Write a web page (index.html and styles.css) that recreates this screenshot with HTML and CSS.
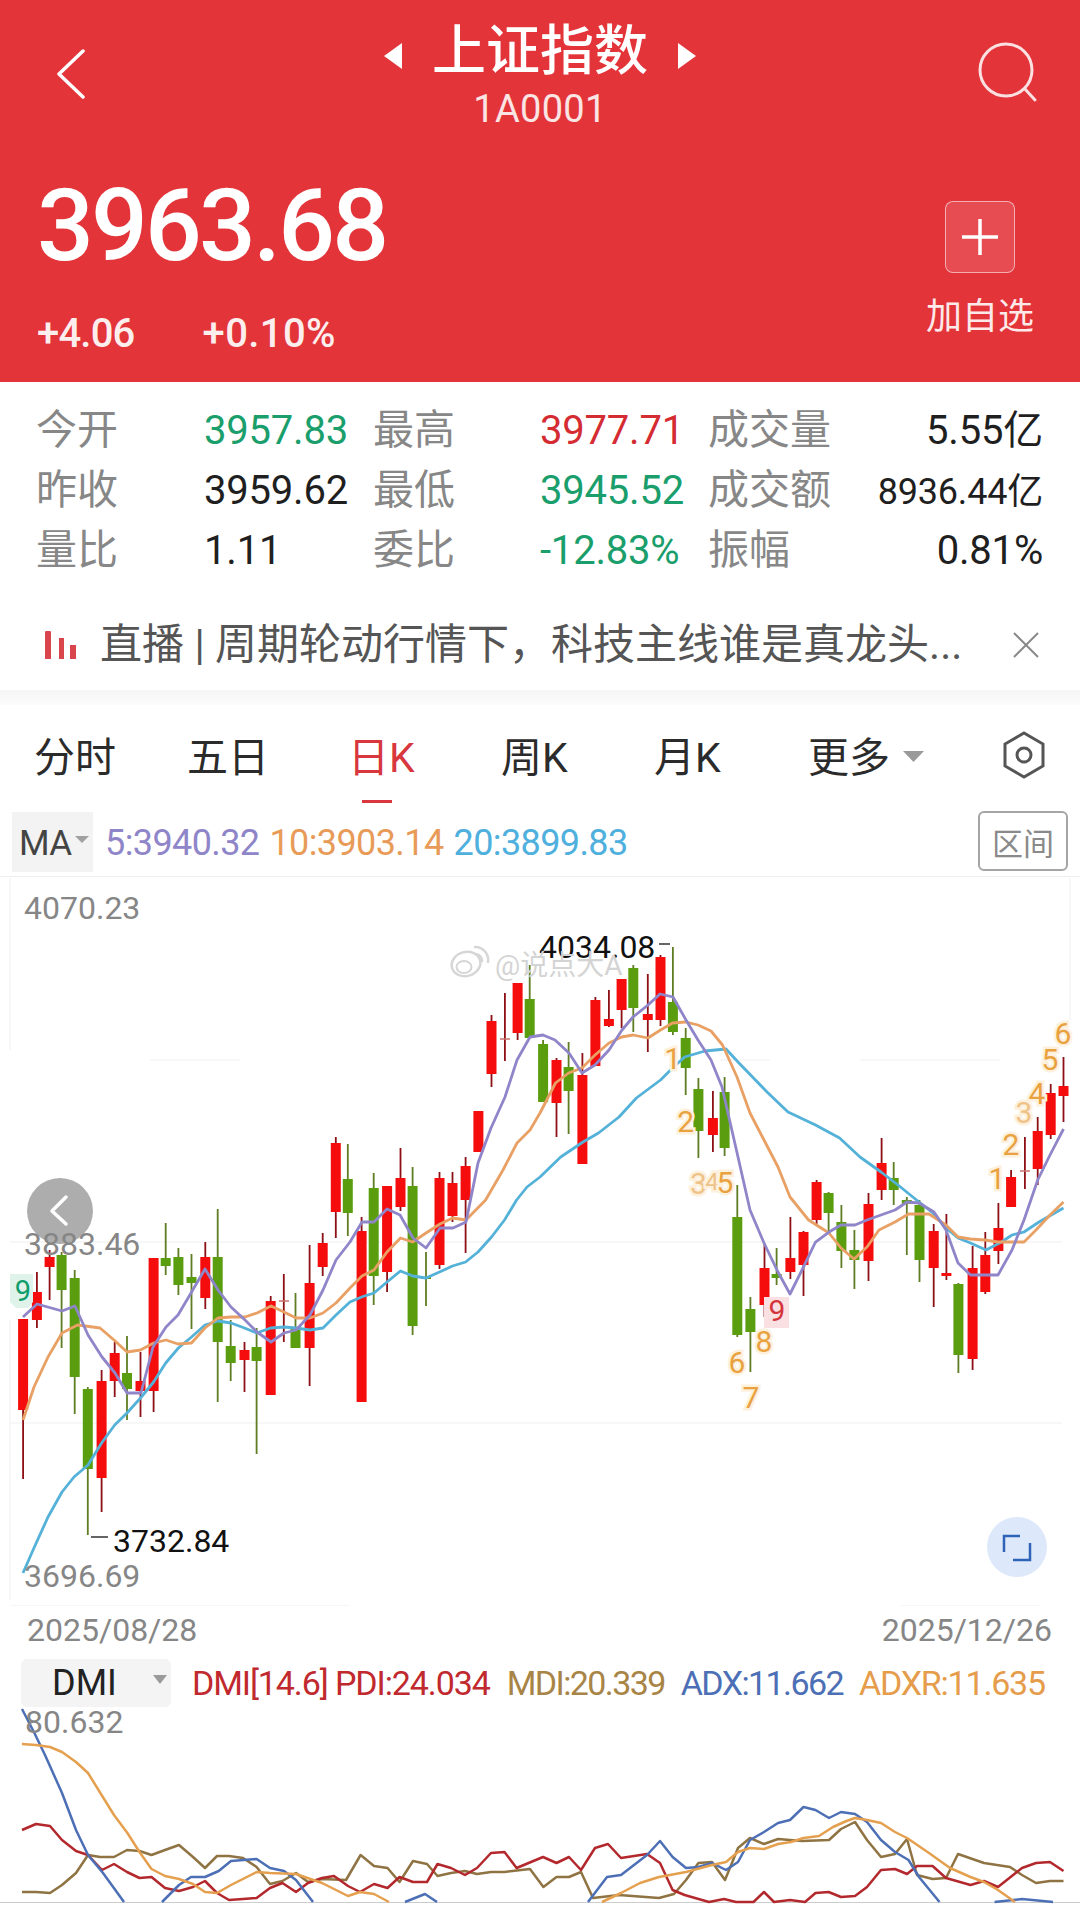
FILE: index.html
```html
<!DOCTYPE html>
<html lang="zh-CN">
<head>
<meta charset="utf-8">
<title>上证指数</title>
<link rel="stylesheet" href="styles.css">
</head>
<body>
<header class="header">
  <nav class="nav">
    <svg class="back" viewBox="0 0 30 50"><path d="M27 2 3 25l24 23"/></svg>
    <div class="nav-center">
      <div class="title-row">
        <svg class="tri" viewBox="0 0 20 26"><path d="M19 0v26L1 13z"/></svg>
        <h1 class="title">上证指数</h1>
        <svg class="tri" viewBox="0 0 20 26"><path d="M1 0v26l18-13z"/></svg>
      </div>
      <div class="code">1A0001</div>
    </div>
    <svg class="search" viewBox="0 0 60 60"><circle cx="29" cy="28" r="26"/><path d="M48 47l10 11"/></svg>
  </nav>
  <section class="quote">
    <div class="quote-main">
      <div class="price">3963.68</div>
      <div class="changes"><span class="chg-a">+4.06</span><span class="chg-b">+0.10%</span></div>
    </div>
    <div class="add">
      <div class="add-btn"><svg viewBox="0 0 36 36"><path d="M18 0v36M0 18h36"/></svg></div>
      <div class="add-label">加自选</div>
    </div>
  </section>
</header>

<section class="stats">
  <span class="lbl">今开</span><span class="val up">3957.83</span>
  <span class="lbl">最高</span><span class="val dn">3977.71</span>
  <span class="lbl">成交量</span><span class="val end">5.55亿</span>
  <span class="lbl">昨收</span><span class="val">3959.62</span>
  <span class="lbl">最低</span><span class="val up">3945.52</span>
  <span class="lbl">成交额</span><span class="val end small">8936.44亿</span>
  <span class="lbl">量比</span><span class="val">1.11</span>
  <span class="lbl">委比</span><span class="val up">-12.83%</span>
  <span class="lbl">振幅</span><span class="val end">0.81%</span>
</section>

<section class="news">
  <svg class="news-icon" viewBox="0 0 31 28"><path d="M0 2a3 3 0 0 1 6 0v26H0zM14 7h5v21h-5zM25 14h6v14h-6z"/></svg>
  <span class="news-text">直播 | 周期轮动行情下，科技主线谁是真龙头...</span>
  <svg class="news-close" viewBox="0 0 26 26"><path d="M1 1l24 24M25 1 1 25"/></svg>
</section>
<div class="band"></div>

<section class="tabs">
  <span class="tab">分时</span>
  <span class="tab">五日</span>
  <span class="tab active">日K<i class="tab-line"></i></span>
  <span class="tab">周K</span>
  <span class="tab">月K</span>
  <span class="tab more">更多<svg class="more-tri" viewBox="0 0 21 11"><path d="M0 0h21L10.500 11z"/></svg></span>
  <svg class="hex" viewBox="0 0 44 48"><path d="M22 2 41 13v22L22 46 3 35V13z"/><circle cx="22" cy="24" r="7"/></svg>
</section>

<section class="ma-row">
  <div class="ma-box">MA<svg class="ma-tri" viewBox="0 0 14 7"><path d="M0 0h14L7 7z"/></svg></div>
  <div class="ma-legend">
    <span class="c5">5:3940.32</span>
    <span class="c10">10:3903.14</span>
    <span class="c20">20:3899.83</span>
  </div>
  <div class="range">区间</div>
</section>

<section class="chart">
  <svg class="kline" viewBox="0 877 1080 729">
    <path class="grid" d="M10 878V1050M10 1320V1600M1070 878V1020M10 1242H1062M10 1423H1062M10 1606H350M900 1606H1040M150 1060H240M720 1060H770M860 1060H1000"/>

    <path class="wick-r" d="M23.100 1319V1479M36.900 1272V1328M49.600 1250V1300M101.600 1370V1512M114.700 1342V1397M140.500 1352V1417M153.600 1258V1412M205.300 1242V1309M244.500 1342V1392M270.700 1296V1395M283.800 1274V1342M309.600 1245V1386M322.700 1233V1276M335.800 1137V1238M361.600 1217V1402M387.100 1186V1292M400.500 1148V1211M439.500 1172V1269M452.500 1172V1222M465.600 1157V1253M491.500 1015V1087M504.900 993V1061M517.600 983V1040M556.500 1058V1137M582.400 1053V1164M595.400 997V1066M608.900 990V1027M621.600 979V1028M647.800 974V1052M660.500 955V1026M712.900 1091V1152M764.500 1243V1317M790.400 1217V1279M803.500 1231V1296M816.600 1180V1226M868.500 1193V1281M881.600 1138V1200M933.700 1224V1307M946.400 1214V1280M972.600 1246V1370M985.300 1232V1294M998.400 1203V1264M1011.100 1170V1207M1024.900 1137V1189M1037.700 1117V1185M1050.700 1084V1139M1063.500 1057V1122"/>
    <path class="wick-g" d="M61.600 1252V1348M74.700 1270V1414M87.800 1387V1535M127 1336V1420M165.700 1223V1275M178.400 1248V1295M191.500 1254V1329M217.700 1209V1402M230.700 1320V1381M256.600 1328V1454M295.500 1293V1348M347.800 1144V1236M373.700 1173V1305M412.600 1167V1335M426 1252V1306M529.700 965V1038M543.100 1040V1102M568.600 1042V1134M633.300 965V1032M672.900 947V1035M685.700 1028V1095M698.400 1078V1158M724.600 1077V1156M737.300 1185V1337M750.400 1297V1372M776.600 1248V1285M828.600 1192V1232M841.400 1205V1268M854.400 1230V1289M893.700 1162V1205M906.800 1197V1255M919.500 1200V1282M958.400 1283V1373"/>

    <path class="body-r" d="M23.100 1319V1410M36.900 1292V1320M49.600 1257V1267M101.600 1381V1478M114.700 1353V1381M140.500 1381V1391M153.600 1258V1391M205.300 1257V1298M244.500 1350V1360M270.700 1301V1395M309.600 1283V1348M322.700 1243V1267M335.800 1143V1212M361.600 1231V1402M387.100 1186V1272M400.500 1178V1207M439.500 1178V1265M452.500 1183V1216M465.600 1166V1200M478.400 1111V1152M491.500 1021V1074M517.600 983V1033M556.500 1060V1103M582.400 1075V1164M595.400 1000V1066M608.900 1019V1026M621.600 979V1010M647.800 1014V1020M660.500 957V1020M712.900 1118V1135M764.500 1268V1305M790.400 1258V1272M803.500 1232V1265M816.600 1182V1220M868.500 1204V1261M881.600 1163V1190M933.700 1231V1268M946.400 1273V1276M972.600 1268V1359M985.300 1255V1292M998.400 1228V1251M1011.100 1177V1207M1037.700 1131V1169M1050.700 1093V1135M1063.500 1086V1096"/>
    <path class="body-g" d="M61.600 1255V1290M74.700 1278V1377M87.800 1389V1469M127 1373V1389M165.700 1258V1266M178.400 1257V1285M191.500 1277V1283M217.700 1257V1342M230.700 1346V1363M256.600 1347V1361M295.500 1328V1348M347.800 1179V1213M373.700 1188V1276M412.600 1186V1326M426 1277V1279M529.700 999V1038M543.100 1044V1102M568.600 1067V1091M633.300 968V1008M672.900 1002V1032M685.700 1038V1068M698.400 1089V1131M724.600 1092V1148M737.300 1217V1335M750.400 1309V1332M776.600 1274V1278M828.600 1193V1213M841.400 1222V1251M854.400 1250V1260M893.700 1178V1190M906.800 1200V1204M919.500 1205V1260M958.400 1284V1355"/>
    <path class="doji" d="M279 1301h10M500 1039h10M1020 1171h10"/>

    <polyline class="ma20" points="23,1573 34.400,1547 48,1517 62,1492 74,1477 88,1465 101.600,1443 114.700,1425 127,1413 140.500,1398 153.600,1382 165.700,1363 178.400,1348 191.500,1337 205,1325 218,1321 231,1323 244.500,1328 256.600,1333 270.700,1328 284,1327 296,1328 310,1330 323,1328 336,1315 350,1302 361.600,1297 374,1293 387,1282 400.500,1271 412.600,1276 426,1278 439.500,1272 452.500,1266 465.600,1262 478,1252 491.500,1237 504.500,1220 516.600,1200 527,1187 540,1177 560.700,1157 583,1142 598.500,1133 619,1117 636.400,1098 660.500,1080 672.600,1068 684.600,1057 705,1051 726,1049 738,1062 753.500,1078 767,1092 788,1112 815.500,1125 839.600,1138 860,1157 881,1172 898,1185 919,1202 933,1213 946,1228 958,1238 970.500,1243 986,1250 1001.500,1242 1012,1235 1024,1232 1039,1222 1063.500,1208"/>
    <polyline class="ma10" points="23,1420 34,1387 48,1357 62,1333 77.500,1325 100,1328 114,1340 127,1352 140.500,1350 153.600,1343 166,1340 178,1344 191.500,1343 205,1328 218,1318 231,1317 245,1317 257,1313 271,1306 284,1312 296,1318 310,1318 323,1313 336,1303 350,1288 362,1276 374,1270 387,1252 400.500,1238 412.600,1242 426,1233 440,1224 452.500,1218 466,1220 485.600,1200 503,1170 517,1143 530,1130 540,1113 555.500,1083 568.600,1073 582,1068 595,1055 609,1043 621.600,1037 633,1035 648,1038 660.500,1030 672.600,1023 685.700,1022 698,1025 711,1031 722.500,1045 737,1077 750,1113 764,1140 778,1167 790,1197 808.600,1220 829,1233 841,1248 854,1259 867,1247 879,1230 895,1222 908.500,1214 929,1214 946,1225 958,1237 970.500,1239 985,1240 998,1242 1024,1242 1036,1230 1050,1215 1063.500,1202"/>
    <polyline class="ma5" points="23,1317 37,1304 62,1311 75,1306 88,1335 102,1357 115,1373 127,1393 141,1393 153,1347 166,1327 178,1315 191,1293 205,1269 218,1290 231,1307 245,1320 257,1332 271,1342 284,1333 296,1330 310,1315 323,1290 336,1260 350,1242 362,1222 374,1222 387,1209 400,1215 413,1238 426,1248 440,1228 453,1228 466,1222 478,1163 491,1128 505,1097 517,1060 530,1037 543,1035 555,1040 569,1053 582,1073 595,1065 609,1050 622,1030 633,1017 648,1005 660,994 673,997 686,1020 698,1040 711,1060 722,1087 738,1157 750,1210 764,1243 778,1272 790,1294 803,1268 815.500,1242 829,1232 841,1225 855,1225 867,1220 881,1215 895,1210 907,1202 919,1203 934,1212 946,1230 958,1263 970.500,1275 985,1275 998,1275 1012,1250 1024,1220 1037.700,1180 1050,1155 1063.500,1129"/>

    <path class="badge-g" d="M10 1274h23v28l-5 6H16l-6-6z"/>
    <text class="bdg-g" x="23" y="1301">9</text>
    <rect class="badge-r" x="764" y="1297" width="25" height="31"/>
    <text class="bdg-r" x="777" y="1321">9</text>

    <text class="nine" x="672.600" y="1069">1</text>
    <text class="nine" x="685.700" y="1132">2</text>
    <text class="nine faint" x="698.400" y="1194">3</text>
    <text class="nine faint mini" x="712" y="1190">4</text>
    <text class="nine" x="725" y="1193">5</text>
    <text class="nine" x="737" y="1373">6</text>
    <text class="nine" x="751" y="1408">7</text>
    <text class="nine" x="764" y="1352">8</text>
    <text class="nine" x="997" y="1189">1</text>
    <text class="nine" x="1011" y="1155">2</text>
    <text class="nine faint" x="1024" y="1123">3</text>
    <text class="nine" x="1037" y="1104">4</text>
    <text class="nine" x="1050" y="1070">5</text>
    <text class="nine" x="1063" y="1044">6</text>

    <circle class="prev-btn" cx="60" cy="1211" r="33"/>
    <path class="prev-arrow" d="M66 1197 52 1211l14 13"/>

    <text class="axis" x="24" y="919">4070.23</text>
    <text class="axis" x="24" y="1255">3883.46</text>
    <text class="axis" x="24" y="1587">3696.69</text>
    <text class="extreme" x="539" y="958">4034.08</text>
    <text class="extreme" x="113" y="1552">3732.84</text>
    <path class="tick" d="M659 944h11M91 1537h17"/>

    <g class="wb">
      <ellipse class="wb-body" cx="466" cy="964" rx="14.500" ry="12" transform="rotate(-15 466 964)"/>
      <ellipse class="wb-eye" cx="464" cy="967" rx="7.500" ry="6"/>
      <path class="wb-arc" d="M475 947a13 13 0 0 1 13 15M476 954a7 7 0 0 1 6 7"/>
    </g>
    <text class="wb-text" x="495" y="975">@说点大A</text>

    <circle class="expand-btn" cx="1017" cy="1547" r="30"/>
    <path class="expand-icon" d="M1020 1536h-16v16M1030 1543v17h-17"/>
  </svg>
</section>

<section class="dates"><span>2025/08/28</span><span>2025/12/26</span></section>

<section class="dmi-row">
  <div class="dmi-box">DMI<svg class="dmi-tri" viewBox="0 0 14 9"><path d="M0 0h14L7 9z"/></svg></div>
  <span class="d-red">DMI[14.6] PDI:24.034</span>
  <span class="d-brown">MDI:20.339</span>
  <span class="d-blue">ADX:11.662</span>
  <span class="d-orange">ADXR:11.635</span>
</section>

<section class="dmi-chart">
  <svg class="dmi" viewBox="0 1707 1080 195">
    <polyline class="l-brown" points="22,1892 36,1892 50,1893 62,1885 76,1873 88,1855 100,1857 114,1857 127,1850 139.500,1851 151.500,1855 165,1850 179,1845 193,1857 205,1868 217,1856 229,1856 243,1858 256.600,1867 270,1884 282.400,1881 296,1873 308,1882 322,1879 346,1880 360.600,1855 374,1866 387.500,1868 399.500,1882 413,1861 427,1864 437.500,1876 451,1873 465,1871 477,1874 491,1872 504.500,1872 530,1869 543.400,1887 556.500,1877 569,1877 581,1872 593,1898 619,1895 659,1898 674,1894 686,1880 698.400,1863 712,1862 725,1880 738,1848 750,1838 764,1844 778,1839 802,1841 829,1840 841,1829 855,1822 867,1840 881,1857 895,1854 907,1839 917,1875 932.600,1879 946,1878 958,1854 984,1863 1010,1867 1022,1875 1036,1883 1050,1881 1063.500,1881"/>
    <polyline class="l-red" points="22,1830 36,1824 50,1826 62,1840 76,1851 88,1855 102,1870 114,1864 127,1872 139.500,1878 151.500,1877 165,1888 179,1891 193,1887 205,1881 217,1893 229,1900 243,1899 256.600,1898 270,1888 282.400,1883 296,1892 308,1883 322,1878 334,1876 348,1886 360,1892 374,1884 387.500,1888 399.500,1877 413,1882 427,1882 437.500,1864 451,1868 465,1875 477,1868 491,1853 504.500,1852 516.600,1868 543,1857 556.500,1863 569,1857 581,1870 595,1848 608,1844 621,1858 647,1854 660,1863 672.600,1890 684.600,1895 709,1902 724,1899 736,1902 753.500,1902 764,1892 774,1902 790,1900 805,1902 815.500,1893 828.600,1892 841,1897 855,1896 867,1887 881,1870 895,1869 907,1874 917,1866 932.600,1866 946,1878 970.500,1885 984,1881 998,1887 1022,1868 1036,1863 1050,1862 1063.500,1871"/>
    <path class="l-blue" d="M22 1709 34.400 1733 45 1755 62 1793 76 1830 88 1855 103 1873 124 1902M162 1902 179 1885 191 1877 205 1877 218.700 1871 231 1861 256.600 1859 270 1868 284 1871 296 1880 313 1902M405 1902 425 1894 437 1902M588 1902 607 1877 621 1875 647 1855 660 1841 672.600 1857 686 1868 698.400 1867 712 1863 726 1870 738 1862 750 1840 764 1832 778 1823 790 1820 803.500 1807 815.500 1810 829 1818 841 1812 855 1814 867 1822 881 1840 895 1852 908.500 1860 919 1877 939.500 1902M994.600 1902 1022 1899 1053 1902"/>
    <path class="l-orange" d="M22 1744 36 1745 50 1747 62 1752 76 1762 88 1773 101.600 1795 114 1815 127.400 1833 139.500 1852 151.500 1869 165 1876 179 1879 193 1884 205 1892 217 1893 231 1885 256.600 1872 270 1873 296 1874 322 1883 348 1896 360 1892 374 1894 389 1902M602 1902 621 1893 640 1883 659 1877 686 1872 712 1865 726 1862 738 1852 750 1848 764 1849 778 1844 791 1842 803.500 1838 819 1836 833 1827 846.500 1821 855 1818 867 1820 881 1823 895 1832 907 1838 929 1853 950 1868 970.500 1877 984 1882 998 1890 1015 1902"/>
    <text class="axis" x="25" y="1733">80.632</text>
  </svg>
</section>
</body>
</html>
```

FILE: styles.css
```css
* { box-sizing: border-box; }
html, body { margin: 0; padding: 0; background: #fff; }
body {
  width: 1080px;
  height: 1924px;
  overflow: hidden;
  font-family: Roboto, "Noto Sans CJK SC", sans-serif;
  color: #222;
}

.header {
  height: 382px;
  padding-top: 16px;
  background: #e3343a;
  color: #fff;
}
.nav {
  display: grid;
  grid-template-columns: 1fr auto 1fr;
  height: 115px;
}
.back {
  width: 30px;
  height: 50px;
  margin: 33px 0 0 56px;
  fill: none;
  stroke: #fff;
  stroke-width: 3.5;
  stroke-linecap: round;
  stroke-linejoin: round;
}
.search {
  justify-self: end;
  width: 60px;
  height: 60px;
  margin: 26px 43px 0 0;
  fill: none;
  stroke: #fff;
  stroke-width: 3;
  stroke-linecap: round;
  opacity: .85;
}
.nav-center { display: flex; flex-direction: column; align-items: center; }
.title-row { display: flex; align-items: flex-start; gap: 29px; }
.title {
  margin: 9px 0 0;
  font-size: 54px;
  line-height: 54px;
  font-weight: 500;
}
.tri { width: 20px; height: 26px; margin-top: 27px; fill: #fff; }
.code {
  margin-top: 8px;
  font-size: 38px;
  line-height: 44px;
  letter-spacing: .3px;
  color: #fbe4e4;
}

.quote {
  display: flex;
  justify-content: space-between;
  margin-top: 45px;
  padding: 0 46px 0 37px;
}
.price {
  font-size: 100px;
  line-height: 100px;
  font-weight: 500;
  letter-spacing: -2.8px;
}
.changes {
  display: flex;
  margin-top: 36px;
  font-size: 40px;
  line-height: 44px;
  font-weight: 500;
  letter-spacing: -.8px;
  color: #fdeeee;
}
.chg-a { margin-right: 68px; }
.chg-b { letter-spacing: .4px; }
.add {
  display: flex;
  flex-direction: column;
  align-items: center;
  margin-top: 25px;
}
.add-btn {
  display: flex;
  align-items: center;
  justify-content: center;
  width: 70px;
  height: 72px;
  border: 1.5px solid rgba(255, 255, 255, .55);
  border-radius: 8px;
  background: rgba(255, 255, 255, .12);
}
.add-btn svg { width: 36px; height: 36px; fill: none; stroke: #fff; stroke-width: 3.5; }
.add-label { margin-top: 21px; font-size: 36px; line-height: 46px; color: #fde9e9; }

.stats {
  display: grid;
  grid-template-columns: 168px 169px 167px 168px 123px 212px;
  grid-auto-rows: 60px;
  align-items: baseline;
  padding: 18px 0 0 36px;
  height: 198px;
  font-size: 41px;
  line-height: 60px;
}
.lbl { color: #878787; }
.val { font-size: 40px; color: #1f1f1f; letter-spacing: -.2px; white-space: nowrap; }
.up { color: #1a9e6c; }
.dn { color: #d42c32; }
.end { justify-self: end; }
.small { font-size: 36px; letter-spacing: -.2px; }

.news {
  display: flex;
  align-items: center;
  height: 110px;
  padding: 20px 41px 0 45px;
}
.news-icon { flex: none; width: 31px; height: 28px; fill: #d8454c; }
.news-text {
  margin-left: 24px;
  font-size: 42px;
  line-height: 60px;
  color: #555;
  white-space: nowrap;
}
.news-close {
  flex: none;
  width: 26px;
  height: 26px;
  margin-left: auto;
  fill: none;
  stroke: #8a8a8a;
  stroke-width: 2;
}
.band { height: 15px; background: linear-gradient(#f6f6f6, #fbfbfb); }

.tabs {
  display: grid;
  grid-template-columns: 153px 164px 150px 153px 154px 194px auto;
  align-items: start;
  height: 103px;
  padding-left: 34px;
  font-size: 41px;
  line-height: 60px;
  color: #2b2b2b;
}
.tab { display: flex; flex-direction: column; margin-top: 23px; }
.active { margin-left: -3px; color: #d7373d; }
.tab-line {
  display: block;
  width: 30px;
  height: 3px;
  margin: 12px 0 0 14px;
  background: #d7373d;
}
.more { flex-direction: row; align-items: flex-start; }
.more-tri { width: 21px; height: 11px; margin: 23px 0 0 13px; fill: #9a9a9a; }
.hex {
  width: 44px;
  height: 48px;
  margin-top: 26px;
  fill: none;
  stroke: #555;
  stroke-width: 3;
}

.ma-row {
  display: flex;
  height: 69px;
  padding: 4px 12px 0 12px;
  border-bottom: 1px solid #eee;
}
.ma-box {
  display: flex;
  align-items: center;
  width: 81px;
  height: 60px;
  padding: 2px 0 0 7px;
  background: #f3f3f3;
  font-size: 35px;
  color: #444;
  letter-spacing: -.5px;
}
.ma-tri { width: 14px; height: 7px; margin: -8px 0 0 3px; fill: #a0a0a0; }
.ma-legend {
  display: flex;
  align-items: center;
  gap: 10px;
  height: 62px;
  margin-left: 12px;
  font-size: 36px;
  letter-spacing: -.6px;
}
.c5 { color: #8f85c9; }
.c10 { color: #e89b58; }
.c20 { color: #4fb0de; }
.range {
  display: flex;
  align-items: center;
  justify-content: center;
  width: 90px;
  height: 60px;
  margin: -1px 0 0 auto;
  border: 2px solid #a5a5a5;
  border-radius: 6px;
  font-size: 31px;
  color: #8a8a8a;
}

.chart { height: 729px; }
.kline { display: block; width: 1080px; height: 729px; }
.kline text, .dmi text { font-family: Roboto, "Noto Sans CJK SC", sans-serif; }
.grid { fill: none; stroke: #f5f5f5; stroke-width: 1.5; }
.wick-r { fill: none; stroke: #8c1015; stroke-width: 1.8; }
.wick-g { fill: none; stroke: #5f7d23; stroke-width: 1.8; }
.body-r { fill: none; stroke: #f50c0c; stroke-width: 10; }
.body-g { fill: none; stroke: #5a9e0f; stroke-width: 10; }
.doji { fill: none; stroke: #c9716f; stroke-width: 1.5; }
.ma5, .ma10, .ma20 { fill: none; stroke-width: 2.8; stroke-linejoin: round; }
.ma5 { stroke: #8f85c9; }
.ma10 { stroke: #e8a064; }
.ma20 { stroke: #54b1d8; }
.badge-g { fill: #dff3ea; }
.badge-r { fill: #fbe0e3; }
.bdg-g { fill: #0f9d6a; font-size: 29px; text-anchor: middle; }
.bdg-r { fill: #d4343c; font-size: 30px; text-anchor: middle; }
.nine {
  fill: #e9a23f;
  stroke: #fdf1de;
  stroke-width: 5;
  paint-order: stroke;
  font-size: 30px;
  text-anchor: middle;
}
.faint { fill: #efc287; }
.mini { font-size: 24px; }
.axis { fill: #868686; font-size: 32px; }
.extreme { fill: #111; font-size: 32px; }
.tick { fill: none; stroke: #333; stroke-width: 1.5; }
.wb-body { fill: #fff; stroke: #d6d6d6; stroke-width: 2.5; }
.wb-eye { fill: #fff; stroke: #d6d6d6; stroke-width: 2; }
.wb-arc { fill: none; stroke: #d6d6d6; stroke-width: 2.5; stroke-linecap: round; }
.wb-text { fill: #d4d4d4; font-size: 28px; }
.prev-btn { fill: #adadad; }
.prev-arrow {
  fill: none;
  stroke: #fff;
  stroke-width: 3.5;
  stroke-linecap: round;
  stroke-linejoin: round;
}
.expand-btn { fill: #dde8fa; }
.expand-icon { fill: none; stroke: #2f63b8; stroke-width: 2.5; }

.dates {
  display: flex;
  justify-content: space-between;
  height: 46px;
  padding: 2px 28px 0 27px;
  font-size: 32px;
  line-height: 44px;
  color: #868686;
}

.dmi-row {
  display: flex;
  align-items: center;
  height: 48px;
  margin-top: 7px;
  padding-left: 21px;
  font-size: 34px;
  letter-spacing: -1.6px;
}
.dmi-box {
  display: flex;
  align-items: center;
  width: 150px;
  height: 48px;
  margin-right: 21px;
  padding-left: 31px;
  border-radius: 6px;
  background: #f4f4f4;
  font-size: 36px;
  letter-spacing: 0;
  color: #222;
}
.dmi-tri { width: 14px; height: 9px; margin: -8px 0 0 36px; fill: #9a9a9a; }
.d-red { margin-right: 17px; letter-spacing: -1.1px; color: #c0292e; }
.d-brown { margin-right: 16px; color: #a88446; }
.d-blue { margin-right: 16px; color: #4c6fb5; }
.d-orange { letter-spacing: -1.2px; color: #e59c4b; }

.dmi-chart { border-bottom: 1px solid #ccc; }
.dmi { display: block; width: 1080px; height: 195px; overflow: visible; }
.l-red, .l-brown, .l-blue, .l-orange { fill: none; stroke-width: 2.5; stroke-linejoin: round; }
.l-red { stroke: #b3282d; }
.l-brown { stroke: #8f7343; }
.l-blue { stroke: #4c6fb5; }
.l-orange { stroke: #e5a04f; }
```
